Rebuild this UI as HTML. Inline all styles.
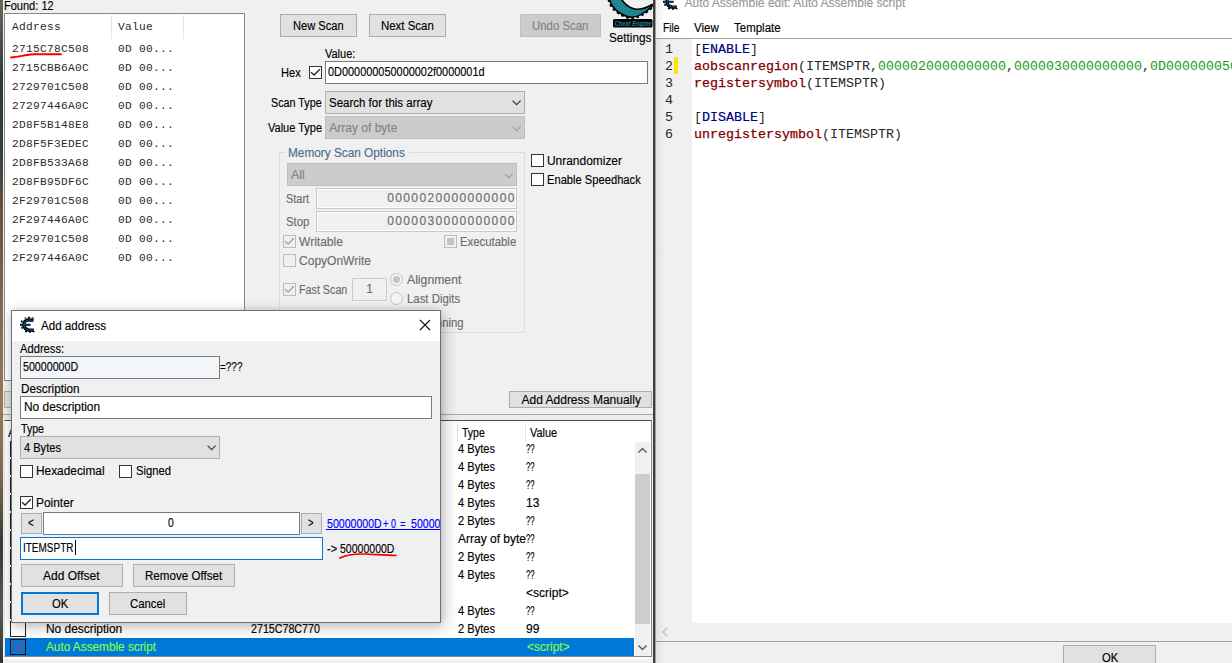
<!DOCTYPE html>
<html><head><meta charset="utf-8">
<style>
*{margin:0;padding:0;box-sizing:border-box}
html,body{width:1232px;height:663px;overflow:hidden;background:#f0f0f0;font-family:"Liberation Sans",sans-serif;font-size:12px;color:#000;position:relative}
.a{position:absolute}
.t{position:absolute;white-space:nowrap;line-height:12px;font-size:12px;-webkit-text-stroke:0.15px currentColor}
.m{position:absolute;white-space:nowrap;line-height:12px;font-family:"Liberation Mono",monospace;font-size:11.2px;letter-spacing:0.28px;color:#2a2a2a}
.btn{position:absolute;background:#e1e1e1;border:1px solid #adadad}
.dis{background:#cccccc;border-color:#bfbfbf}
.ed{position:absolute;background:#fff;border:1px solid #7a7a7a}
.cb{position:absolute;width:13px;height:13px;border:1px solid #333;background:#fff}
.cbd{border-color:#bcbcbc;background:#f0f0f0}
.code{position:absolute;white-space:pre;line-height:17px;font-family:"Liberation Mono",monospace;font-size:13.33px;color:#262626}
.kw{color:#800000;-webkit-text-stroke:0.25px #800000}
.nv{color:#000080;-webkit-text-stroke:0.2px #000080}
.gr{color:#189818}

</style></head><body>
<div class="a" style="left:0;top:0;width:3px;height:663px;background:linear-gradient(#6a6a60,#2f3a35 12%,#33403a 22%,#6a5040 32%,#8a6a50 48%,#9a7a58 62%,#7a6a50 72%,#3a3a35 82%,#5a5a55 92%,#333 100%)"></div>
<div class="a" style="left:3px;top:0;width:650px;height:663px;background:#f0f0f0"></div>
<div class="t" style="left:3.90px;top:0.10px;transform:scaleX(0.9185);transform-origin:0 0">Found: 12</div>
<div class="a" style="left:4px;top:13px;width:241px;height:368px;background:#fff;border:1px solid #828790"></div>
<div class="a" style="left:111px;top:15px;width:1px;height:24px;background:#e5e5e5"></div>
<div class="a" style="left:183px;top:15px;width:1px;height:24px;background:#e5e5e5"></div>
<div class="m" style="left:12px;top:21px">Address</div>
<div class="m" style="left:118px;top:21px">Value</div>
<div class="m" style="left:12px;top:43px">2715C78C508</div><div class="m" style="left:118px;top:43px">0D 00...</div>
<div class="m" style="left:12px;top:62px">2715CBB6A0C</div><div class="m" style="left:118px;top:62px">0D 00...</div>
<div class="m" style="left:12px;top:81px">2729701C508</div><div class="m" style="left:118px;top:81px">0D 00...</div>
<div class="m" style="left:12px;top:100px">27297446A0C</div><div class="m" style="left:118px;top:100px">0D 00...</div>
<div class="m" style="left:12px;top:119px">2D8F5B148E8</div><div class="m" style="left:118px;top:119px">0D 00...</div>
<div class="m" style="left:12px;top:138px">2D8F5F3EDEC</div><div class="m" style="left:118px;top:138px">0D 00...</div>
<div class="m" style="left:12px;top:157px">2D8FB533A68</div><div class="m" style="left:118px;top:157px">0D 00...</div>
<div class="m" style="left:12px;top:176px">2D8FB95DF6C</div><div class="m" style="left:118px;top:176px">0D 00...</div>
<div class="m" style="left:12px;top:195px">2F29701C508</div><div class="m" style="left:118px;top:195px">0D 00...</div>
<div class="m" style="left:12px;top:214px">2F297446A0C</div><div class="m" style="left:118px;top:214px">0D 00...</div>
<div class="m" style="left:12px;top:233px">2F29701C508</div><div class="m" style="left:118px;top:233px">0D 00...</div>
<div class="m" style="left:12px;top:252px">2F297446A0C</div><div class="m" style="left:118px;top:252px">0D 00...</div>
<svg class="a" style="left:9px;top:52px" width="56" height="8"><path d="M2 5.5 C8 5 12 4 18 3 C20 2.5 22 2.3 26 2.3 L52 2.3" stroke="#f00" stroke-width="2" fill="none" stroke-linecap="round"/></svg>
<div class="a" style="left:280px;top:14px;width:77px;height:23px;background:#e1e1e1;border:1px solid #adadad"></div>
<div class="t" style="left:292.50px;top:20.30px;transform:scaleX(0.9273);transform-origin:0 0">New Scan</div>
<div class="a" style="left:369px;top:14px;width:77px;height:23px;background:#e1e1e1;border:1px solid #adadad"></div>
<div class="t" style="left:381.10px;top:20.30px;transform:scaleX(0.9527);transform-origin:0 0">Next Scan</div>
<div class="a" style="left:520px;top:14px;width:81px;height:23px;background:#cccccc;border:1px solid #bfbfbf"></div>
<div class="t" style="left:532.30px;top:20.30px;color:#838383;transform:scaleX(0.9508);transform-origin:0 0">Undo Scan</div>
<div class="t" style="left:609.20px;top:31.80px;transform:scaleX(0.9744);transform-origin:0 0">Settings</div>
<div class="t" style="left:325.20px;top:47.60px;transform:scaleX(0.9152);transform-origin:0 0">Value:</div>
<div class="t" style="left:281.40px;top:66.70px;transform:scaleX(0.9238);transform-origin:0 0">Hex</div>
<div class="a" style="left:309px;top:66px;width:13px;height:13px;background:#fff;border:1px solid #333"></div>
<svg class="a" style="left:309px;top:66px" width="13" height="13"><path d="M2.00 6.30 L5.10 9.00 L10.79 3.20" stroke="#222" stroke-width="1.3" fill="none"/></svg>
<div class="a" style="left:325px;top:61px;width:323px;height:23px;background:#fff;border:1px solid #7a7a7a"></div>
<div class="t" style="left:328.00px;top:66.20px;transform:scaleX(0.9093);transform-origin:0 0">0D000000050000002f0000001d</div>
<div class="t" style="left:271.40px;top:97.30px;transform:scaleX(0.8965);transform-origin:0 0">Scan Type</div>
<div class="a" style="left:325px;top:91px;width:200px;height:23px;background:#e1e1e1;border:1px solid #adadad"></div>
<div class="t" style="left:329.30px;top:97.30px;transform:scaleX(0.9574);transform-origin:0 0">Search for this array</div>
<svg class="a" style="left:512px;top:100px" width="10" height="6"><path d="M0.6 0.6 L4.6 4.6 L8.6 0.6" stroke="#333" stroke-width="1.2" fill="none"/></svg>
<div class="t" style="left:268.40px;top:122.30px;transform:scaleX(0.9169);transform-origin:0 0">Value Type</div>
<div class="a" style="left:325px;top:116px;width:200px;height:23px;background:#cccccc;border:1px solid #bfbfbf"></div>
<div class="t" style="left:329.30px;top:122.30px;color:#838383">Array of byte</div>
<svg class="a" style="left:512px;top:125.5px" width="10" height="6"><path d="M0.6 0.6 L4.6 4.6 L8.6 0.6" stroke="#a0a0a0" stroke-width="1.2" fill="none"/></svg>
<div class="a" style="left:279px;top:152px;width:246px;height:181px;border:1px solid #dcdcdc"></div>
<div class="a" style="left:285px;top:146px;width:124px;height:12px;background:#f0f0f0"></div>
<div class="t" style="left:288.40px;top:147.30px;color:#4d6e8c;transform:scaleX(0.9840);transform-origin:0 0">Memory Scan Options</div>
<div class="a" style="left:287px;top:163px;width:230px;height:23px;background:#cccccc;border:1px solid #bfbfbf"></div>
<div class="t" style="left:291.40px;top:168.60px;color:#838383;transform:scaleX(1.0308);transform-origin:0 0">All</div>
<svg class="a" style="left:504px;top:172.5px" width="10" height="6"><path d="M0.6 0.6 L4.6 4.6 L8.6 0.6" stroke="#a0a0a0" stroke-width="1.2" fill="none"/></svg>
<div class="a" style="left:316px;top:188px;width:201px;height:21px;background:#f0f0f0;border:1px solid #c8c8c8;box-shadow:inset 0 0 0 1px #fff"></div>
<div class="t" style="left:286.30px;top:192.90px;color:#6d6d6d;transform:scaleX(0.9115);transform-origin:0 0">Start</div>
<div class="t" style="left:387.30px;top:192.20px;color:#6d6d6d;letter-spacing:1.35px">0000020000000000</div>
<div class="a" style="left:316px;top:211px;width:201px;height:21px;background:#f0f0f0;border:1px solid #c8c8c8;box-shadow:inset 0 0 0 1px #fff"></div>
<div class="t" style="left:286.30px;top:215.90px;color:#6d6d6d;transform:scaleX(0.9480);transform-origin:0 0">Stop</div>
<div class="t" style="left:387.30px;top:215.10px;color:#6d6d6d;letter-spacing:1.35px">0000030000000000</div>
<div class="a" style="left:283px;top:235px;width:13px;height:13px;background:#f0f0f0;border:1px solid #bcbcbc"></div>
<svg class="a" style="left:283px;top:235px" width="13" height="13"><path d="M2.00 6.30 L5.10 9.00 L10.79 3.20" stroke="#a0a0a0" stroke-width="1.3" fill="none"/></svg>
<div class="t" style="left:299.10px;top:235.90px;color:#6d6d6d">Writable</div>
<div class="a" style="left:444px;top:235px;width:13px;height:13px;background:#f0f0f0;border:1px solid #bcbcbc"></div>
<div class="a" style="left:447px;top:238px;width:7px;height:7px;background:#c4c4c4"></div>
<div class="t" style="left:460.40px;top:235.90px;color:#6d6d6d;transform:scaleX(0.9467);transform-origin:0 0">Executable</div>
<div class="a" style="left:283px;top:254px;width:13px;height:13px;background:#f0f0f0;border:1px solid #bcbcbc"></div>
<div class="t" style="left:299.10px;top:255.00px;color:#6d6d6d">CopyOnWrite</div>
<div class="a" style="left:283px;top:283px;width:13px;height:13px;background:#f0f0f0;border:1px solid #bcbcbc"></div>
<svg class="a" style="left:283px;top:283px" width="13" height="13"><path d="M2.00 6.30 L5.10 9.00 L10.79 3.20" stroke="#a0a0a0" stroke-width="1.3" fill="none"/></svg>
<div class="t" style="left:299.10px;top:284.00px;color:#6d6d6d;transform:scaleX(0.8944);transform-origin:0 0">Fast Scan</div>
<div class="a" style="left:352px;top:278px;width:35px;height:23px;background:#f0f0f0;border:1px solid #cccccc"></div>
<div class="t" style="left:366.20px;top:282.70px;color:#6d6d6d">1</div>
<div class="a" style="left:390px;top:273px;width:13px;height:13px;background:#f4f4f4;border:1px solid #c4c4c4;border-radius:50%"></div>
<div class="a" style="left:393px;top:276px;width:7px;height:7px;background:#c4c4c4;border-radius:50%"></div>
<div class="t" style="left:406.60px;top:274.30px;color:#6d6d6d;transform:scaleX(1.0185);transform-origin:0 0">Alignment</div>
<div class="a" style="left:390px;top:292px;width:13px;height:13px;background:#f4f4f4;border:1px solid #c4c4c4;border-radius:50%"></div>
<div class="t" style="left:406.60px;top:293.10px;color:#6d6d6d;transform:scaleX(0.9482);transform-origin:0 0">Last Digits</div>
<div class="t" style="left:353.50px;top:316.80px;color:#6d6d6d;transform:scaleX(0.9440);transform-origin:0 0">Pause while scanning</div>
<div class="a" style="left:531px;top:154px;width:13px;height:13px;background:#fff;border:1px solid #333"></div>
<div class="t" style="left:547.30px;top:154.80px;transform:scaleX(0.9947);transform-origin:0 0">Unrandomizer</div>
<div class="a" style="left:531px;top:173px;width:13px;height:13px;background:#fff;border:1px solid #333"></div>
<div class="t" style="left:547.30px;top:173.75px;transform:scaleX(0.9304);transform-origin:0 0">Enable Speedhack</div>
<div class="a" style="left:4px;top:391px;width:120px;height:17px;background:#e1e1e1;border:1px solid #adadad"></div>
<div class="a" style="left:509px;top:391px;width:143px;height:17px;background:#e1e1e1;border:1px solid #adadad"></div>
<div class="t" style="left:521.50px;top:393.90px">Add Address Manually</div>
<div class="a" style="left:3px;top:414px;width:650px;height:1px;background:#a8a8a8"></div>
<div class="a" style="left:3px;top:415px;width:650px;height:5px;background:#ececec"></div>
<div class="a" style="left:4px;top:420px;width:648px;height:237px;background:#fff;border:1px solid #828790;border-top-color:#505050;border-left-color:#e4e4e4"></div>
<div class="a" style="left:457px;top:423px;width:1px;height:19px;background:#e5e5e5"></div>
<div class="a" style="left:525px;top:423px;width:1px;height:19px;background:#e5e5e5"></div>
<div class="t" style="left:8.00px;top:426.80px">Active</div>
<div class="t" style="left:461.90px;top:426.80px;transform:scaleX(0.8769);transform-origin:0 0">Type</div>
<div class="t" style="left:529.50px;top:426.80px;transform:scaleX(0.9100);transform-origin:0 0">Value</div>
<div class="a" style="left:10px;top:441px;width:16px;height:16px;background:#fff;border:1px solid #222"></div>
<div class="t" style="left:458.00px;top:443.00px;transform:scaleX(0.9250);transform-origin:0 0">4 Bytes</div>
<div class="t" style="left:526.10px;top:443.00px;transform:scaleX(0.6500);transform-origin:0 0">??</div>
<div class="a" style="left:10px;top:459px;width:16px;height:16px;background:#fff;border:1px solid #222"></div>
<div class="t" style="left:458.00px;top:461.00px;transform:scaleX(0.9250);transform-origin:0 0">4 Bytes</div>
<div class="t" style="left:526.10px;top:461.00px;transform:scaleX(0.6500);transform-origin:0 0">??</div>
<div class="a" style="left:10px;top:477px;width:16px;height:16px;background:#fff;border:1px solid #222"></div>
<div class="t" style="left:458.00px;top:479.00px;transform:scaleX(0.9250);transform-origin:0 0">4 Bytes</div>
<div class="t" style="left:526.10px;top:479.00px;transform:scaleX(0.6500);transform-origin:0 0">??</div>
<div class="a" style="left:10px;top:495px;width:16px;height:16px;background:#fff;border:1px solid #222"></div>
<div class="t" style="left:458.00px;top:497.00px;transform:scaleX(0.9250);transform-origin:0 0">4 Bytes</div>
<div class="t" style="left:526.10px;top:497.00px">13</div>
<div class="a" style="left:10px;top:513px;width:16px;height:16px;background:#fff;border:1px solid #222"></div>
<div class="t" style="left:458.00px;top:515.00px;transform:scaleX(0.9250);transform-origin:0 0">2 Bytes</div>
<div class="t" style="left:526.10px;top:515.00px;transform:scaleX(0.6500);transform-origin:0 0">??</div>
<div class="a" style="left:10px;top:531px;width:16px;height:16px;background:#fff;border:1px solid #222"></div>
<div class="t" style="left:458.00px;top:533.00px">Array of byte</div>
<div class="t" style="left:526.10px;top:533.00px;transform:scaleX(0.6500);transform-origin:0 0">??</div>
<div class="a" style="left:10px;top:549px;width:16px;height:16px;background:#fff;border:1px solid #222"></div>
<div class="t" style="left:458.00px;top:551.00px;transform:scaleX(0.9250);transform-origin:0 0">2 Bytes</div>
<div class="t" style="left:526.10px;top:551.00px;transform:scaleX(0.6500);transform-origin:0 0">??</div>
<div class="a" style="left:10px;top:567px;width:16px;height:16px;background:#fff;border:1px solid #222"></div>
<div class="t" style="left:458.00px;top:569.00px;transform:scaleX(0.9250);transform-origin:0 0">4 Bytes</div>
<div class="t" style="left:526.10px;top:569.00px;transform:scaleX(0.6500);transform-origin:0 0">??</div>
<div class="a" style="left:10px;top:585px;width:16px;height:16px;background:#fff;border:1px solid #222"></div>
<div class="t" style="left:526.10px;top:587.00px">&lt;script&gt;</div>
<div class="a" style="left:10px;top:603px;width:16px;height:16px;background:#fff;border:1px solid #222"></div>
<div class="t" style="left:458.00px;top:605.00px;transform:scaleX(0.9250);transform-origin:0 0">4 Bytes</div>
<div class="t" style="left:526.10px;top:605.00px;transform:scaleX(0.6500);transform-origin:0 0">??</div>
<div class="a" style="left:10px;top:621px;width:16px;height:16px;background:#fff;border:1px solid #222"></div>
<div class="t" style="left:458.00px;top:623.00px;transform:scaleX(0.9250);transform-origin:0 0">2 Bytes</div>
<div class="t" style="left:526.10px;top:623.00px">99</div>
<div class="a" style="left:5px;top:638px;width:629px;height:18px;background:#0078d7"></div>
<div class="t" style="left:527.00px;top:641.00px;color:#84ff40">&lt;script&gt;</div>
<div class="t" style="left:45.50px;top:622.50px;transform:scaleX(0.9935);transform-origin:0 0">No description</div>
<div class="t" style="left:251.40px;top:622.90px;transform:scaleX(0.8897);transform-origin:0 0">2715C78C770</div>
<div class="a" style="left:10px;top:639px;width:16px;height:16px;background:#0078d7;border:1px solid #111"></div>
<svg class="a" style="left:10px;top:639px" width="16" height="16"><path d="M1.5 1.5 L14.5 14.5 M14.5 1.5 L1.5 14.5" stroke="#e0203a" stroke-width="1"/></svg>
<div class="t" style="left:45.50px;top:640.70px;color:#84ff40;transform:scaleX(0.9823);transform-origin:0 0">Auto Assemble script</div>
<div class="a" style="left:635px;top:442px;width:15px;height:214px;background:#f0f0f0"></div>
<div class="a" style="left:635px;top:474px;width:15px;height:150px;background:#cdcdcd"></div>
<svg class="a" style="left:638px;top:447px" width="10" height="6"><path d="M0.5 5.5 L4.5 1.5 L8.5 5.5" stroke="#606060" stroke-width="1.5" fill="none"/></svg>
<svg class="a" style="left:638px;top:645px" width="10" height="6"><path d="M0.5 0.5 L4.5 4.5 L8.5 0.5" stroke="#606060" stroke-width="1.5" fill="none"/></svg>
<div class="a" style="left:3px;top:657px;width:650px;height:2px;background:#fafafa"></div>
<div class="a" style="left:653px;top:0px;width:2px;height:663px;background:#463e36"></div>
<div class="a" style="left:11px;top:310px;width:430px;height:313px;background:#f0f0f0;border:1px solid #707070;box-shadow:0 0 7px rgba(0,0,0,.12),3px 4px 14px rgba(0,0,0,.24)"></div>
<div class="a" style="left:12px;top:311px;width:428px;height:30px;background:#fff"></div>
<div class="t" style="left:41.30px;top:320.00px;transform:scaleX(0.9657);transform-origin:0 0">Add address</div>
<svg class="a" style="left:419px;top:319px" width="12" height="12"><path d="M1 1 L11 11 M11 1 L1 11" stroke="#111" stroke-width="1.1"/></svg>
<div class="t" style="left:20.40px;top:342.70px;transform:scaleX(0.9319);transform-origin:0 0">Address:</div>
<div class="a" style="left:20px;top:356px;width:200px;height:23px;background:#f2f6fb;border:1px solid #7a7a7a"></div>
<div class="t" style="left:23.20px;top:361.00px;transform:scaleX(0.8887);transform-origin:0 0">50000000D</div>
<div class="t" style="left:220.10px;top:361.00px;transform:scaleX(0.8296);transform-origin:0 0">=???</div>
<div class="t" style="left:20.80px;top:382.80px;transform:scaleX(0.9750);transform-origin:0 0">Description</div>
<div class="a" style="left:20px;top:396px;width:412px;height:23px;background:#fff;border:1px solid #7a7a7a"></div>
<div class="t" style="left:23.80px;top:400.60px;transform:scaleX(0.9922);transform-origin:0 0">No description</div>
<div class="t" style="left:20.80px;top:423.00px;transform:scaleX(0.8846);transform-origin:0 0">Type</div>
<div class="a" style="left:20px;top:436px;width:200px;height:23px;background:#e1e1e1;border:1px solid #adadad"></div>
<div class="t" style="left:23.80px;top:441.80px;transform:scaleX(0.9225);transform-origin:0 0">4 Bytes</div>
<svg class="a" style="left:206.5px;top:445.3px" width="10" height="6"><path d="M0.6 0.6 L4.6 4.6 L8.6 0.6" stroke="#3a3a3a" stroke-width="1.2" fill="none"/></svg>
<div class="a" style="left:20px;top:465px;width:13px;height:13px;background:#fff;border:1px solid #333"></div>
<div class="t" style="left:36.40px;top:465.20px;transform:scaleX(0.9884);transform-origin:0 0">Hexadecimal</div>
<div class="a" style="left:119px;top:465px;width:13px;height:13px;background:#fff;border:1px solid #333"></div>
<div class="t" style="left:135.50px;top:465.20px;transform:scaleX(0.9378);transform-origin:0 0">Signed</div>
<div class="a" style="left:20px;top:496px;width:13px;height:13px;background:#fff;border:1px solid #333"></div>
<svg class="a" style="left:20px;top:496px" width="13" height="13"><path d="M2.00 6.30 L5.10 9.00 L10.79 3.20" stroke="#222" stroke-width="1.3" fill="none"/></svg>
<div class="t" style="left:36.40px;top:496.90px;transform:scaleX(0.9921);transform-origin:0 0">Pointer</div>
<div class="a" style="left:21px;top:513px;width:21px;height:21px;background:#e1e1e1;border:1px solid #adadad"></div>
<div class="t" style="left:28.00px;top:517.00px;transform:scaleX(0.8286);transform-origin:0 0">&lt;</div>
<div class="a" style="left:43px;top:512px;width:257px;height:23px;background:#fff;border:1px solid #7a7a7a"></div>
<div class="t" style="left:167.50px;top:517.00px;transform:scaleX(0.8571);transform-origin:0 0">0</div>
<div class="a" style="left:301px;top:513px;width:21px;height:21px;background:#e1e1e1;border:1px solid #adadad"></div>
<div class="t" style="left:307.80px;top:517.00px;transform:scaleX(0.7857);transform-origin:0 0">&gt;</div>
<div class="a" style="left:326px;top:512px;width:114px;height:20px;overflow:hidden"><div class="t" style="left:0.70px;top:5.80px;color:#0000ff;transform:scaleX(0.8823);transform-origin:0 0">50000000D</div>
<div class="t" style="left:56.90px;top:5.80px;color:#0000ff;transform:scaleX(0.7857);transform-origin:0 0">+</div>
<div class="t" style="left:64.50px;top:5.80px;color:#0000ff;transform:scaleX(0.7429);transform-origin:0 0">0</div>
<div class="t" style="left:73.80px;top:5.80px;color:#0000ff;transform:scaleX(0.8000);transform-origin:0 0">=</div>
<div class="t" style="left:84.90px;top:5.80px;color:#0000ff;transform:scaleX(0.8823);transform-origin:0 0">50000000D</div>
<div class="a" style="left:0px;top:17px;width:114px;height:1px;background:#0000ff"></div>
</div>
<div class="a" style="left:20px;top:537px;width:303px;height:23px;background:#fff;border:1px solid #0078d7"></div>
<div class="t" style="left:23.40px;top:541.70px;transform:scaleX(0.8311);transform-origin:0 0">ITEMSPTR</div>
<div class="a" style="left:75px;top:540px;width:1px;height:15px;background:#000"></div>
<div class="t" style="left:326.90px;top:542.50px;transform:scaleX(0.9182);transform-origin:0 0">-&gt;</div>
<div class="t" style="left:339.80px;top:542.50px;transform:scaleX(0.8774);transform-origin:0 0">50000000D</div>
<svg class="a" style="left:336px;top:550px" width="64" height="12"><path d="M4 8 C10 5 18 3.8 28 4 C38 4.2 48 5.5 60 5.5" stroke="#e00" stroke-width="1.7" fill="none" stroke-linecap="round"/></svg>
<div class="a" style="left:21px;top:564px;width:102px;height:23px;background:#e1e1e1;border:1px solid #adadad"></div>
<div class="t" style="left:43.00px;top:570.00px">Add Offset</div>
<div class="a" style="left:133px;top:564px;width:102px;height:23px;background:#e1e1e1;border:1px solid #adadad"></div>
<div class="t" style="left:145.30px;top:570.00px;transform:scaleX(0.9662);transform-origin:0 0">Remove Offset</div>
<div class="a" style="left:21px;top:592px;width:78px;height:23px;background:#e1e1e1;border:2px solid #0078d7"></div>
<div class="t" style="left:52.30px;top:598.00px;transform:scaleX(0.9353);transform-origin:0 0">OK</div>
<div class="a" style="left:109px;top:592px;width:78px;height:23px;background:#e1e1e1;border:1px solid #adadad"></div>
<div class="t" style="left:130.40px;top:598.00px;transform:scaleX(0.9432);transform-origin:0 0">Cancel</div>
<div class="a" style="left:655px;top:0px;width:577px;height:663px;background:#f0f0f0"></div>
<div class="a" style="left:655px;top:0px;width:577px;height:38px;background:#fff"></div>
<div class="t" style="left:684.50px;top:-3.20px;color:#999">Auto Assemble edit: Auto Assemble script</div>
<div class="t" style="left:662.70px;top:21.80px;transform:scaleX(0.8550);transform-origin:0 0">File</div>
<div class="t" style="left:694.20px;top:21.80px;transform:scaleX(0.9615);transform-origin:0 0">View</div>
<div class="t" style="left:734.00px;top:21.80px;transform:scaleX(0.9571);transform-origin:0 0">Template</div>
<div class="a" style="left:655px;top:38px;width:577px;height:1px;background:#a0a0a8"></div>
<div class="a" style="left:655px;top:39px;width:577px;height:584px;background:#fff"></div>
<div class="a" style="left:655px;top:39px;width:37px;height:584px;background:#f0f0f0"></div>
<div class="a" style="left:674px;top:57px;width:4px;height:17px;background:#ffe400"></div>
<div class="code" style="left:665px;top:40.6px">1
2
3
4
5
6</div>
<div class="code" style="left:694px;top:40.6px">[<span class="nv">ENABLE</span>]
<span class="kw">aobscanregion</span>(ITEMSPTR,<span class="gr">0000020000000000</span>,<span class="gr">0000030000000000</span>,<span class="gr">0D000000050000002f0000001d</span>)
<span class="kw">registersymbol</span>(ITEMSPTR)

[<span class="nv">DISABLE</span>]
<span class="kw">unregistersymbol</span>(ITEMSPTR)</div>
<div class="a" style="left:655px;top:623px;width:577px;height:18px;background:#f0f0f0"></div>
<svg class="a" style="left:661px;top:627px" width="8" height="10"><path d="M6 1 L2 5 L6 9" stroke="#c0c0c0" stroke-width="1.5" fill="none"/></svg>
<div class="a" style="left:655px;top:641px;width:577px;height:1px;background:#a0a0a0"></div>
<div class="a" style="left:1063px;top:645px;width:93px;height:23px;background:#e1e1e1;border:1px solid #adadad"></div>
<div class="t" style="left:1101.70px;top:652.00px;transform:scaleX(0.9353);transform-origin:0 0">OK</div>
<div class="a" style="left:655px;top:0px;width:10px;height:663px;background:linear-gradient(90deg,rgba(0,0,0,.07),rgba(0,0,0,0))"></div>
<div class="a" style="left:655px;top:0px;width:1px;height:663px;background:#9aa0a6"></div>
<svg class="a" style="left:19px;top:316px" width="18" height="18"><path d="M14.6 4.2 L9.2 3.9 Q5 4.4 4.9 8.6 Q5 13.2 9.6 14 L14.8 14.1" stroke="#000" stroke-width="3.3" fill="none"/>
<path d="M1 8.8 L11.6 8.8" stroke="#000" stroke-width="2"/>
<path d="M6.5 2.6 v-1.2 M10 2.2 v-1.4 M13.8 2.6 v-1.2 M3.6 5.6 h-1.6 M3.8 11.8 h-1.6 M7 15 v1.3 M11 15.2 v1.6 M14.5 15 v1.3" stroke="#000" stroke-width="2"/>
<path d="M14.2 4.2 L9.2 4 Q5.1 4.5 5 8.6 Q5.1 13 9.6 13.9 L14.4 14" stroke="#0a62a0" stroke-width="1.0" fill="none"/>
<path d="M2 8.8 L11 8.8" stroke="#0b6db0" stroke-width="0.7"/></svg>
<svg class="a" style="left:662px;top:-6.8px" width="18" height="18"><path d="M14.6 4.2 L9.2 3.9 Q5 4.4 4.9 8.6 Q5 13.2 9.6 14 L14.8 14.1" stroke="#000" stroke-width="3.3" fill="none"/>
<path d="M1 8.8 L11.6 8.8" stroke="#000" stroke-width="2"/>
<path d="M6.5 2.6 v-1.2 M10 2.2 v-1.4 M13.8 2.6 v-1.2 M3.6 5.6 h-1.6 M3.8 11.8 h-1.6 M7 15 v1.3 M11 15.2 v1.6 M14.5 15 v1.3" stroke="#000" stroke-width="2"/>
<path d="M14.2 4.2 L9.2 4 Q5.1 4.5 5 8.6 Q5.1 13 9.6 13.9 L14.4 14" stroke="#0a62a0" stroke-width="1.0" fill="none"/>
<path d="M2 8.8 L11 8.8" stroke="#0b6db0" stroke-width="0.7"/></svg>
<svg class="a" style="left:605px;top:0" width="48" height="30">
<path d="M4.5 -1 Q6 6 12 11 Q19 16.5 26 17 Q36 17 47 6" stroke="#000" stroke-width="4.2" fill="none" stroke-dasharray="2.6 2.4"/>
<path d="M4 -2 Q6 6 12 11 Q20 17 27 17.3 Q36 17 48 5.5 L47 4.5 Q39 9.5 31 9.3 Q22 8 15.5 -2 Z" fill="#1f8494" stroke="#000" stroke-width="1.6"/>
<rect x="8" y="19" width="39.5" height="8.5" rx="1.5" fill="#000"/>
<text x="9.5" y="26" font-family="Liberation Sans" font-size="7.6" font-weight="bold" font-style="italic" fill="#1f7f8f" textLength="37" lengthAdjust="spacingAndGlyphs">Cheat Engine</text>
</svg>
</body></html>
